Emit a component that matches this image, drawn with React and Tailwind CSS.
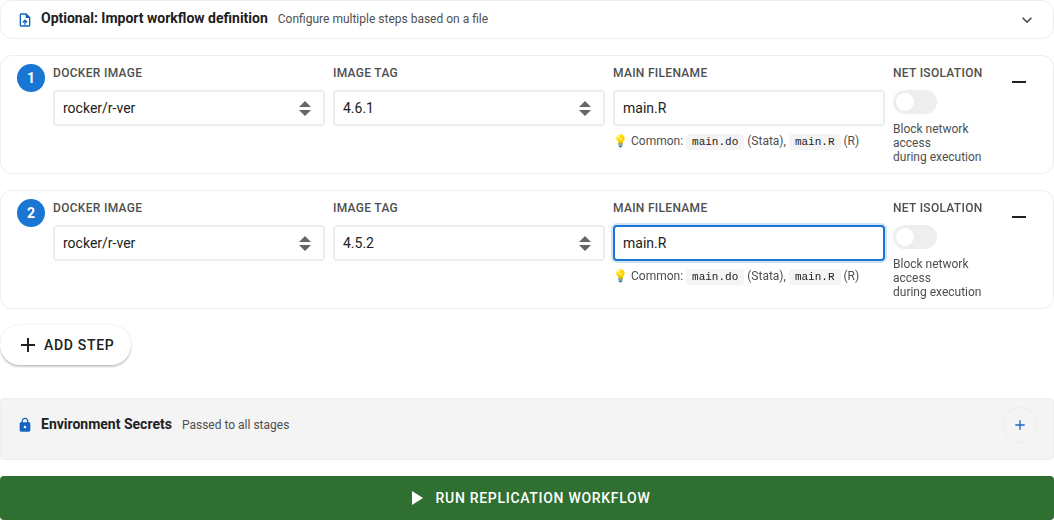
import { useState } from "react";
import {
  MdAdd,
  MdExpandMore,
  MdLock,
  MdOutlineUploadFile,
  MdPlayArrow,
  MdRemove,
} from "react-icons/md";

const images = ["rocker/r-ver", "rocker/tidyverse", "dataeditors/stata18"];
const tags = ["4.6.1", "4.5.2", "4.4.3"];

const initialSteps = [
  { id: 1, image: "rocker/r-ver", tag: "4.6.1", filename: "main.R", isolated: false },
  { id: 2, image: "rocker/r-ver", tag: "4.5.2", filename: "main.R", isolated: false },
];

const labelClass =
  "block mb-2 text-xs leading-[18px] font-medium tracking-wide uppercase text-[#4f4f4f]";

const fieldClass =
  "block w-full h-9 px-2 text-sm text-[#212121] bg-white border-2 border-[#eeeeee] rounded outline-none focus:border-[#1976d2] focus:ring-2 focus:ring-[#1976d2]/20";

const SelectField = ({ id, label, value, options, onChange }) => (
  <div>
    <label htmlFor={id} className={labelClass}>
      {label}
    </label>
    <div className="relative">
      <select
        id={id}
        value={value}
        onChange={(e) => onChange(e.target.value)}
        className={`${fieldClass} appearance-none`}
      >
        {options.map((option) => (
          <option key={option} value={option}>
            {option}
          </option>
        ))}
      </select>
      <svg
        viewBox="0 0 12 16"
        className="absolute right-3.5 top-2.5 w-3 h-4 fill-[#666666] pointer-events-none"
        aria-hidden="true"
      >
        <path d="M0 7 L6 1 L12 7 Z M0 10 L6 16 L12 10 Z" />
      </svg>
    </div>
  </div>
);

const Code = ({ children }) => (
  <code className="px-[6px] py-[2px] rounded bg-[#f4f4f4] text-[#212121] text-[11px] font-['Liberation_Mono',monospace]">
    {children}
  </code>
);

const StepCard = ({ step, number, focused, onChange, onRemove }) => (
  <section className="grid grid-cols-[28px_1fr_1fr_1fr_100px_36px] items-start gap-x-2 px-4 pt-2 pb-[9px] border border-[#eeeeee] rounded-xl bg-white">
    <div className="flex items-center justify-center size-7 rounded-full bg-[#1976d2] text-white text-sm font-bold">
      {number}
    </div>

    <SelectField
      id={`image-${step.id}`}
      label="Docker Image"
      value={step.image}
      options={images}
      onChange={(image) => onChange({ image })}
    />
    <SelectField
      id={`tag-${step.id}`}
      label="Image Tag"
      value={step.tag}
      options={tags}
      onChange={(tag) => onChange({ tag })}
    />

    <div>
      <label htmlFor={`filename-${step.id}`} className={labelClass}>
        Main Filename
      </label>
      <input
        id={`filename-${step.id}`}
        type="text"
        value={step.filename}
        autoFocus={focused}
        onChange={(e) => onChange({ filename: e.target.value })}
        className={fieldClass}
      />
      <p className="mt-1.5 text-xs leading-[18px] text-[#4f4f4f]">
        💡 Common: <Code>main.do</Code> (Stata), <Code>main.R</Code> (R)
      </p>
    </div>

    {/* Network isolation switch */}
    <div>
      <label htmlFor={`isolation-${step.id}`} className={labelClass}>
        Net Isolation
      </label>
      <input
        id={`isolation-${step.id}`}
        type="checkbox"
        role="switch"
        checked={step.isolated}
        onChange={(e) => onChange({ isolated: e.target.checked })}
        className="block appearance-none w-11 h-6 p-[3px] rounded-full bg-[#eeeeee] checked:bg-[#1976d2] cursor-pointer before:block before:size-[18px] before:rounded-full before:bg-white before:transition-transform checked:before:translate-x-5"
      />
      <p className="mt-2 text-xs leading-[14px] text-[#4f4f4f]">
        Block network access
        <br />
        during execution
      </p>
    </div>

    <button
      type="button"
      onClick={onRemove}
      aria-label="Remove step"
      className="flex items-center justify-center size-9 rounded-full text-[#212121] hover:bg-gray-100"
    >
      <MdRemove className="size-6" />
    </button>
  </section>
);

export default function App() {
  const [steps, setSteps] = useState(initialSteps);

  const updateStep = (id, changes) => {
    setSteps((prev) =>
      prev.map((step) => (step.id === id ? { ...step, ...changes } : step))
    );
  };

  const removeStep = (id) => {
    setSteps((prev) => prev.filter((step) => step.id !== id));
  };

  const addStep = () => {
    setSteps((prev) => [
      ...prev,
      { id: Date.now(), image: images[0], tag: tags[0], filename: "main.R", isolated: false },
    ]);
  };

  return (
    <div className="flex flex-col gap-4 bg-white text-[#212121] font-[Roboto,sans-serif]">
      {/* Import workflow */}
      <button
        type="button"
        className="flex items-center w-full px-4 py-2 border border-[#eeeeee] rounded-xl bg-white text-left"
      >
        <MdOutlineUploadFile className="size-4 mr-2 text-[#1565c0]" />
        <span className="flex items-baseline gap-2.5 pb-0.5">
          <span className="text-sm leading-[19px] font-bold">
            Optional: Import workflow definition
          </span>
          <span className="text-xs leading-[18px] text-[#4f4f4f]">
            Configure multiple steps based on a file
          </span>
        </span>
        <MdExpandMore className="size-5 ml-auto text-[#4f4f4f]" />
      </button>

      {steps.map((step, index) => (
        <StepCard
          key={step.id}
          step={step}
          number={index + 1}
          focused={index === 1}
          onChange={(changes) => updateStep(step.id, changes)}
          onRemove={() => removeStep(step.id)}
        />
      ))}

      <button
        type="button"
        onClick={addStep}
        className="self-start flex items-center gap-1 h-10 px-4 rounded-full bg-white text-sm font-medium tracking-wider uppercase shadow-[0_2px_2px_rgba(0,0,0,0.2),0_0_2px_rgba(0,0,0,0.12)]"
      >
        <MdAdd className="size-6" />
        Add Step
      </button>

      {/* Environment secrets */}
      <section className="flex items-start mt-[17px] px-4 pt-2 pb-4 border border-[#eeeeee] rounded bg-[#f4f4f4]">
        <div className="flex items-center h-9">
          <MdLock className="size-4 mr-2 text-[#1565c0]" />
          <div className="flex items-baseline gap-2.5 pb-0.5">
            <h2 className="text-sm leading-[19px] font-bold">
              Environment Secrets
            </h2>
            <span className="text-xs leading-[18px] text-[#4f4f4f]">
              Passed to all stages
            </span>
          </div>
        </div>
        <button
          type="button"
          aria-label="Add secret"
          className="flex items-center justify-center w-[34px] h-9 ml-auto border border-[#eeeeee] rounded-full text-[#1565c0]"
        >
          <MdAdd className="size-4" />
        </button>
      </section>

      <button
        type="button"
        className="flex items-center justify-center gap-2 w-full h-11 rounded bg-[#2f6f32] text-white text-sm font-medium tracking-wider uppercase"
      >
        <MdPlayArrow className="size-6" />
        Run Replication Workflow
      </button>
    </div>
  );
}
